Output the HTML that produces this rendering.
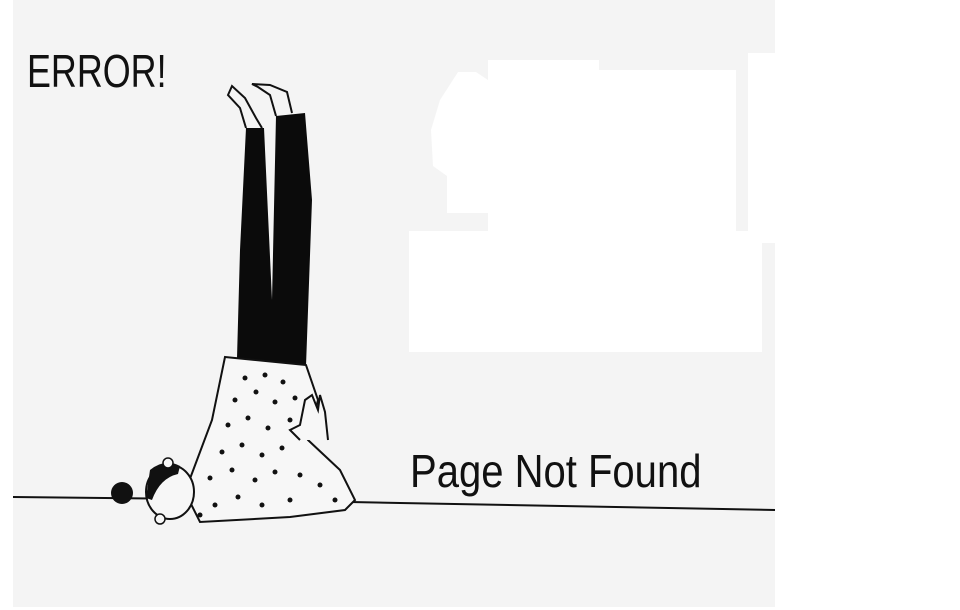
<!DOCTYPE html>
<html><head><meta charset="utf-8">
<style>
html,body{margin:0;padding:0;background:#fff;width:960px;height:610px;overflow:hidden}
.panel{position:absolute;left:13px;top:0;width:762px;height:607px;background:#f4f4f4}
.w{position:absolute;background:#fff}
.t{position:absolute;font-family:"Liberation Sans",sans-serif;color:#111;white-space:nowrap;transform-origin:0 0}
</style></head><body>
<div class="panel"></div>
<div class="w" style="left:488px;top:60px;width:111px;height:172px"></div>
<div class="w" style="left:488px;top:70px;width:248px;height:162px"></div>
<div class="w" style="left:748px;top:53px;width:28px;height:190px"></div>
<div class="w" style="left:409px;top:231px;width:353px;height:121px"></div>
<svg style="position:absolute;left:0;top:0" width="960" height="610">
<path d="M458,72 L476,72 L488,80 L488,213 L447,213 L447,176 L433,166 L431,130 L440,100 Z" fill="#fff"/>
<path d="M13,497 L200,499 L400,503 L775,510" stroke="#111" stroke-width="2" fill="none"/>
<path d="M246,128 L264,128 L272,300 L276,116 L305,113 L312,200 L306,366 L237,358 L240,250 Z" fill="#0b0b0b"/>
<path d="M246,128 L240,108 L228,95 L232,86 L245,98 L256,118 L262,128" fill="none" stroke="#111" stroke-width="2"/>
<path d="M276,116 L270,95 L258,87 L252,84 L270,85 L287,92 L292,113" fill="none" stroke="#111" stroke-width="2"/>
<path d="M225,357 L306,365 L318,400 L308,440 L340,470 L355,500 L345,510 L290,517 L200,522 L185,492 L212,420 Z" fill="#f7f7f7" stroke="#111" stroke-width="2"/>
<g fill="#111">
<circle cx="245" cy="378" r="2.5"/><circle cx="265" cy="375" r="2.5"/><circle cx="283" cy="382" r="2.5"/><circle cx="235" cy="400" r="2.5"/><circle cx="256" cy="392" r="2.5"/><circle cx="275" cy="402" r="2.5"/><circle cx="295" cy="398" r="2.5"/><circle cx="228" cy="425" r="2.5"/><circle cx="248" cy="418" r="2.5"/><circle cx="268" cy="428" r="2.5"/><circle cx="290" cy="420" r="2.5"/><circle cx="222" cy="452" r="2.5"/><circle cx="242" cy="445" r="2.5"/><circle cx="262" cy="455" r="2.5"/><circle cx="282" cy="448" r="2.5"/><circle cx="210" cy="478" r="2.5"/><circle cx="232" cy="470" r="2.5"/><circle cx="255" cy="480" r="2.5"/><circle cx="275" cy="472" r="2.5"/><circle cx="300" cy="475" r="2.5"/><circle cx="215" cy="505" r="2.5"/><circle cx="238" cy="497" r="2.5"/><circle cx="262" cy="505" r="2.5"/><circle cx="290" cy="500" r="2.5"/><circle cx="320" cy="485" r="2.5"/><circle cx="335" cy="500" r="2.5"/><circle cx="200" cy="515" r="2.5"/>
</g>
<path d="M300,440 L290,430 L300,425 L305,400 L312,395 L318,410 L320,395 L325,412 L328,440" fill="#f7f7f7" stroke="#111" stroke-width="2"/>
<ellipse cx="170" cy="492" rx="24" ry="27" fill="#f7f7f7" stroke="#111" stroke-width="2"/>
<path d="M150,470 Q165,458 180,466 L178,474 Q160,478 152,500 L146,498 Z" fill="#111"/>
<circle cx="122" cy="493" r="11" fill="#111"/>
<circle cx="168" cy="463" r="5" fill="#f7f7f7" stroke="#111" stroke-width="1.5"/>
<circle cx="160" cy="519" r="5" fill="#f7f7f7" stroke="#111" stroke-width="1.5"/>
</svg>
<div class="t" style="left:27px;top:44px;font-size:46px;transform:scaleX(0.78)">ERROR!</div>
<div class="t" style="left:410px;top:444px;font-size:46px;transform:scaleX(0.87)">Page Not Found</div>
</body></html>
